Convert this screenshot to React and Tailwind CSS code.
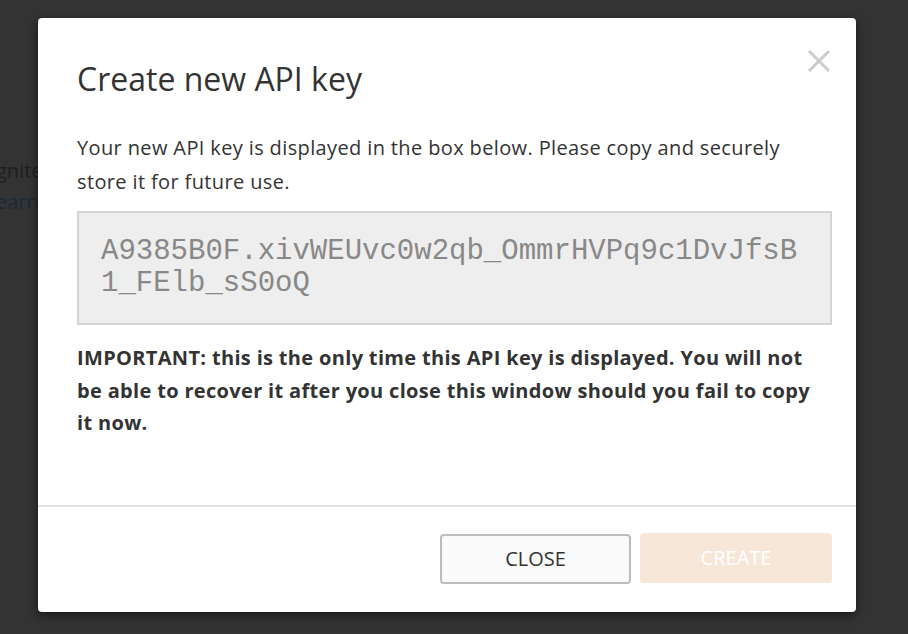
import React from "react";

export default function App() {
  return (
    <div
      className="relative w-[908px] h-[634px] overflow-hidden bg-[#333333]"
      style={{ fontFamily: '"Open Sans", "Noto Sans", sans-serif' }}
    >
      {/* background page content, dimmed under the overlay */}
      <div className="pt-[155px] -ml-[4px] text-[20px] leading-[31px]">
        <div className="text-[#1f1f1f]">gnite</div>
        <div className="text-[#1b2a36]">earn</div>
      </div>

      {/* modal */}
      <div className="absolute left-[38px] top-[18px] w-[818px] h-[594px] bg-white rounded-[4px] shadow-[0_3px_10px_rgba(0,0,0,0.55)] flex flex-col">
        <button className="absolute right-[25px] top-[31px] w-[24px] h-[24px] flex items-center justify-center">
          <svg width="24" height="24" viewBox="0 0 24 24">
            <path d="M2 2 L22 22 M22 2 L2 22" stroke="#cccccc" strokeWidth="3" fill="none" />
          </svg>
        </button>

        <div className="pl-[39px] pr-[24px] pt-[41px] pb-[65px]">
          <h2 className="text-[32px] leading-[40px] text-[#333333] font-normal">
            Create new API key
          </h2>
          <p className="mt-[32px] w-[735px] text-[20px] leading-[34px] tracking-[0.37px] text-[#333333]">
            Your new API key is displayed in the box below. Please copy and securely store it for future use.
          </p>
          <div
            className="mt-[12px] border-2 border-[#d4d4d4] bg-[#eeeeee] pl-[22px] pr-[25px] py-[23px] text-[29px] leading-[32px] text-[#888888] break-all"
            style={{ fontFamily: '"Liberation Mono", "Courier New", monospace' }}
          >
            A9385B0F.xivWEUvc0w2qb_OmmrHVPq9c1DvJfsB1_FElb_sS0oQ
          </div>
          <p className="mt-[17px] w-[745px] text-[20px] leading-[32.5px] tracking-[0.33px] font-bold text-[#333333]">
            IMPORTANT: this is the only time this API key is displayed. You will not be able to recover it after you close this window should you fail to copy it now.
          </p>
        </div>

        <div className="border-t-2 border-[#e2e2e2] flex justify-end gap-[9px] pt-[26px] pr-[24px]">
          <button className="w-[191px] h-[50px] mt-px bg-[#fafafa] border-2 border-[#bcbcbc] rounded-[4px] text-[20px] text-[#333333] uppercase">
            Close
          </button>
          <button className="w-[192px] h-[50px] bg-[#f6e7d9] rounded-[4px] text-[20px] text-white uppercase">
            Create
          </button>
        </div>
      </div>
    </div>
  );
}
